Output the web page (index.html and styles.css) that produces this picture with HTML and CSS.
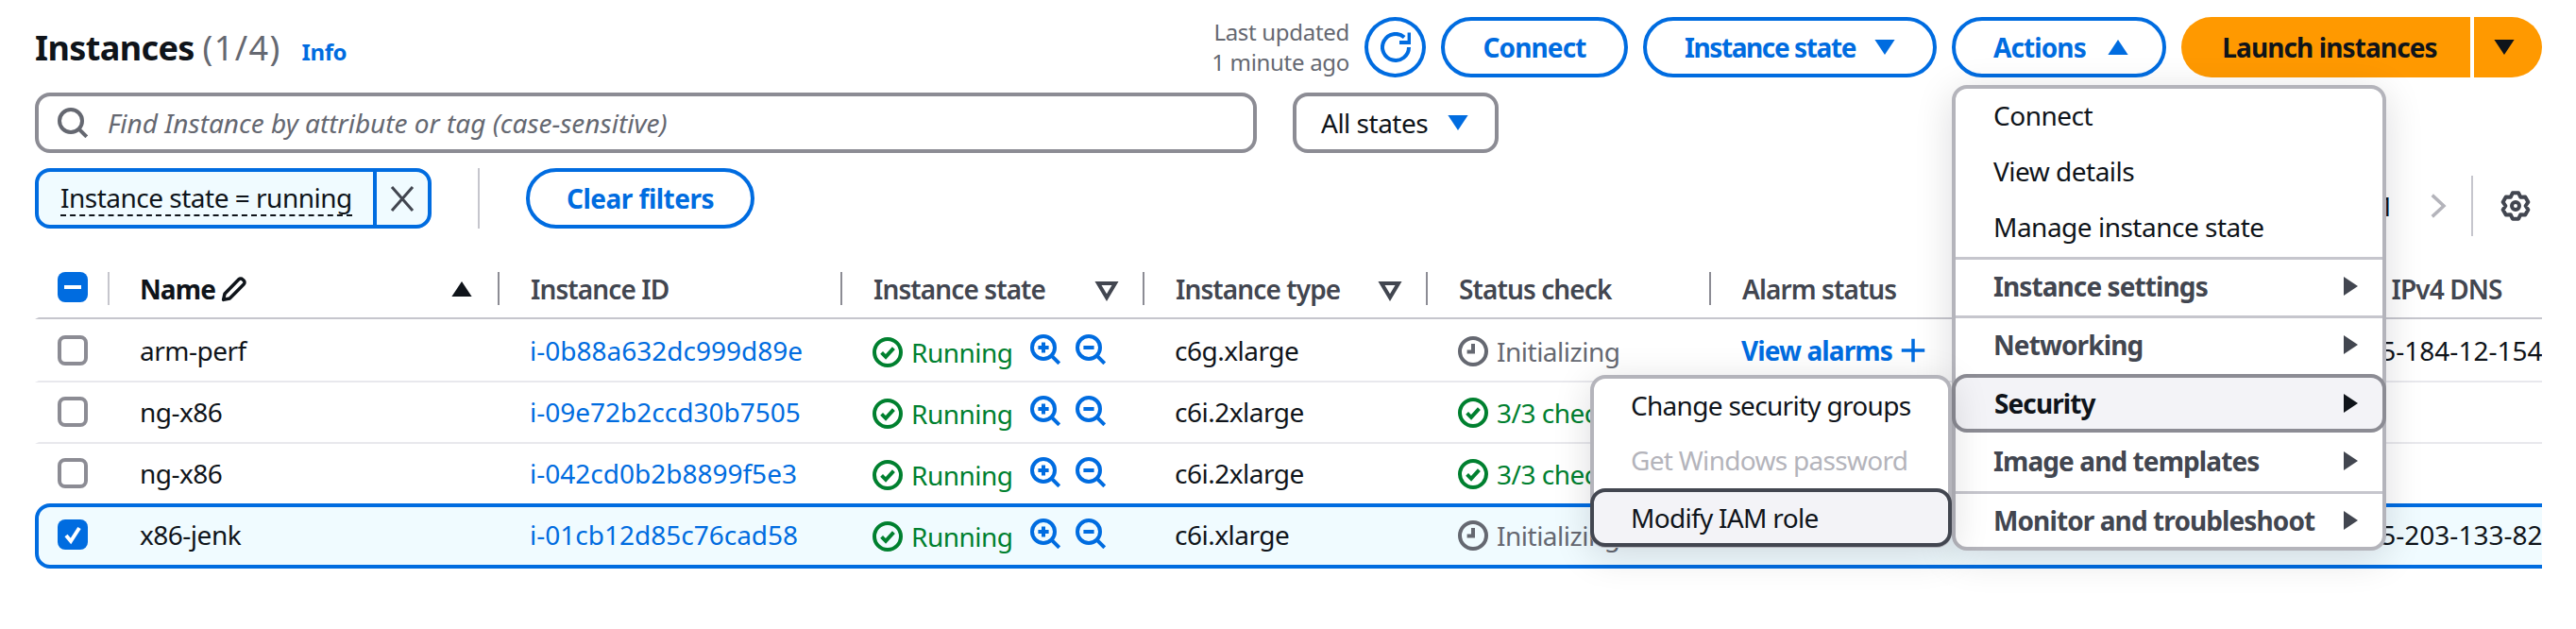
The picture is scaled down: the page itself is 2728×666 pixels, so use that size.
FILE: index.html
```html
<!DOCTYPE html>
<html lang="en">
<head>
    <meta charset="UTF-8">
    <meta name="viewport" content="width=device-width, initial-scale=1.0">
    <link rel="stylesheet" href="styles.css">
    <title>Instances</title>
</head>
<body>
    <svg class="sprite" aria-hidden="true">
        <symbol id="i-check" viewBox="0 0 16 16"><circle cx="8" cy="8" r="7"/><path d="M4.8 8.2 7 10.4l4.2-4.6"/></symbol>
        <symbol id="i-clock" viewBox="0 0 16 16"><circle cx="8" cy="8" r="7"/><path d="M8 4v4.2H4.8"/></symbol>
        <symbol id="i-zoom-in" viewBox="0 0 16 16"><circle cx="7" cy="7" r="6"/><path d="M11.4 11.4 15.4 15.4M4.2 7h5.6M7 4.2v5.6"/></symbol>
        <symbol id="i-zoom-out" viewBox="0 0 16 16"><circle cx="7" cy="7" r="6"/><path d="M11.4 11.4 15.4 15.4M4.2 7h5.6"/></symbol>
        <symbol id="i-down" viewBox="0 0 16 16"><path class="solid" d="M2.7 4h10.6L8 12z"/></symbol>
        <symbol id="i-up" viewBox="0 0 16 16"><path class="solid" d="M2.7 12h10.6L8 4z"/></symbol>
        <symbol id="i-right" viewBox="0 0 16 16"><path class="solid" d="M4.5 3 12 8l-7.500 5z"/></symbol>
        <symbol id="i-sort" viewBox="0 0 16 16"><path d="M3.500 5h9L8 12.500z"/></symbol>
    </svg>

    <div class="page">
        <!-- title row -->
        <header class="top-bar">
            <h1>Instances <span class="count">(1/4)</span> <a class="info">Info</a></h1>
            <div class="actions">
                <div class="updated">Last updated<br>1 minute ago</div>
                <button class="btn btn-icon">
                    <svg class="icon" viewBox="0 0 16 16"><path d="M15 8A7 7 0 1 1 12.600 2.700"/><path d="M15.300 .3v5.200H10"/></svg>
                </button>
                <button class="btn btn-connect">Connect</button>
                <button class="btn btn-state">Instance state <svg class="icon"><use href="#i-down"/></svg></button>
                <button class="btn btn-actions">Actions <svg class="icon"><use href="#i-up"/></svg></button>
                <div class="launch">
                    <button class="launch-main">Launch instances</button>
                    <button class="launch-caret"><svg class="icon"><use href="#i-down"/></svg></button>
                </div>
            </div>
        </header>

        <!-- search -->
        <div class="search-row">
            <div class="search">
                <svg class="icon search-icon" viewBox="0 0 16 16"><circle cx="7" cy="7" r="6"/><path d="M11.400 11.400 15.400 15.400"/></svg>
                <span class="placeholder">Find Instance by attribute or tag (case-sensitive)</span>
            </div>
            <div class="select">All states <svg class="icon"><use href="#i-down"/></svg></div>
        </div>

        <!-- filters and pagination -->
        <div class="filter-row">
            <div class="token">
                <span class="token-label"><span>Instance state = running</span></span>
                <span class="token-x"><svg class="icon" viewBox="0 0 16 16"><path d="M2.500 2 13.500 14.500M13.500 2 2.500 14.500"/></svg></span>
            </div>
            <span class="filter-divider"></span>
            <button class="btn btn-clear">Clear filters</button>
            <div class="pager">
                <span class="pager-num">1</span>
                <svg class="icon pager-next" viewBox="0 0 16 16"><path d="M5 1.500 12 8l-7 6.500"/></svg>
                <span class="pager-divider"></span>
                <svg class="icon pager-gear" viewBox="0 0 16 16"><path d="M9.570 1.180H6.430L5.350 3.410 2.880 3.230 1.310 5.950 2.700 8 1.310 10.050 2.880 12.770 5.350 12.590 6.430 14.820H9.570L10.650 12.590 13.120 12.770 14.690 10.050 13.300 8 14.690 5.950 13.120 3.230 10.650 3.410z"/><circle cx="8" cy="8" r="2"/></svg>
            </div>
        </div>

        <!-- table -->
        <div class="table">
            <div class="row head">
                <div class="cell check-cell"><span class="checkbox on"><svg viewBox="0 0 16 16"><path d="M3.500 8h9"/></svg></span></div>
                <div class="cell name-head"><span class="head-label">Name <svg class="icon pencil" viewBox="0 0 16 16"><path d="M1.500 14.500 2.300 10.800 10.800 2.200a1.600 1.600 0 0 1 2.300 0l.7.7a1.600 1.600 0 0 1 0 2.300L5.300 13.700z"/></svg></span><svg class="icon sort"><use href="#i-up"/></svg></div>
                <div class="cell">Instance ID</div>
                <div class="cell">Instance state <svg class="icon sort"><use href="#i-sort"/></svg></div>
                <div class="cell">Instance type <svg class="icon sort"><use href="#i-sort"/></svg></div>
                <div class="cell">Status check</div>
                <div class="cell">Alarm status</div>
                <div class="cell"><span><span class="dns-public">Public</span> IPv4 DNS</span></div>
            </div>

            <div class="row">
                <div class="cell check-cell"><span class="checkbox"></span></div>
                <div class="cell">arm-perf</div>
                <div class="cell"><a class="link">i-0b88a632dc999d89e</a></div>
                <div class="cell state"><svg class="icon"><use href="#i-check"/></svg>Running<span class="zooms"><svg class="icon"><use href="#i-zoom-in"/></svg><svg class="icon"><use href="#i-zoom-out"/></svg></span></div>
                <div class="cell">c6g.xlarge</div>
                <div class="cell pending"><svg class="icon"><use href="#i-clock"/></svg>Initializing</div>
                <div class="cell alarms">View alarms <svg class="icon" viewBox="0 0 16 16"><path d="M8 1v14M1 8h14"/></svg></div>
                <div class="cell dns">ec2-35-184-12-154.us-east-2</div>
            </div>
            <div class="row">
                <div class="cell check-cell"><span class="checkbox"></span></div>
                <div class="cell">ng-x86</div>
                <div class="cell"><a class="link">i-09e72b2ccd30b7505</a></div>
                <div class="cell state"><svg class="icon"><use href="#i-check"/></svg>Running<span class="zooms"><svg class="icon"><use href="#i-zoom-in"/></svg><svg class="icon"><use href="#i-zoom-out"/></svg></span></div>
                <div class="cell">c6i.2xlarge</div>
                <div class="cell passed"><svg class="icon"><use href="#i-check"/></svg>3/3 checks passed</div>
                <div class="cell"></div>
                <div class="cell"></div>
            </div>
            <div class="row no-line">
                <div class="cell check-cell"><span class="checkbox"></span></div>
                <div class="cell">ng-x86</div>
                <div class="cell"><a class="link">i-042cd0b2b8899f5e3</a></div>
                <div class="cell state"><svg class="icon"><use href="#i-check"/></svg>Running<span class="zooms"><svg class="icon"><use href="#i-zoom-in"/></svg><svg class="icon"><use href="#i-zoom-out"/></svg></span></div>
                <div class="cell">c6i.2xlarge</div>
                <div class="cell passed"><svg class="icon"><use href="#i-check"/></svg>3/3 checks passed</div>
                <div class="cell"></div>
                <div class="cell"></div>
            </div>
            <div class="row selected">
                <div class="cell check-cell"><span class="checkbox on"><svg viewBox="0 0 16 16"><path d="M4.500 8.500 7 11.500l4.500-7"/></svg></span></div>
                <div class="cell">x86-jenk</div>
                <div class="cell"><a class="link">i-01cb12d85c76cad58</a></div>
                <div class="cell state"><svg class="icon"><use href="#i-check"/></svg>Running<span class="zooms"><svg class="icon"><use href="#i-zoom-in"/></svg><svg class="icon"><use href="#i-zoom-out"/></svg></span></div>
                <div class="cell">c6i.xlarge</div>
                <div class="cell pending"><svg class="icon"><use href="#i-clock"/></svg>Initializing</div>
                <div class="cell"></div>
                <div class="cell dns">ec2-35-203-133-82.us-east-2</div>
            </div>
        </div>

        <!-- actions menu -->
        <div class="menu actions-menu">
            <div class="menu-group">
                <div class="menu-item">Connect</div>
                <div class="menu-item">View details</div>
                <div class="menu-item">Manage instance state</div>
            </div>
            <div class="menu-item parent">Instance settings <svg class="icon"><use href="#i-right"/></svg></div>
            <div class="menu-item parent">Networking <svg class="icon"><use href="#i-right"/></svg></div>
            <div class="menu-item parent open">Security <svg class="icon"><use href="#i-right"/></svg></div>
            <div class="menu-item parent after-open">Image and templates <svg class="icon"><use href="#i-right"/></svg></div>
            <div class="menu-item parent">Monitor and troubleshoot <svg class="icon"><use href="#i-right"/></svg></div>
        </div>

        <!-- security submenu -->
        <div class="menu sub-menu">
            <div class="menu-item">Change security groups</div>
            <div class="menu-item disabled">Get Windows password</div>
            <div class="menu-item active">Modify IAM role</div>
        </div>
    </div>
</body>
</html>
```

FILE: styles.css
```css
* {
    margin: 0;
    padding: 0;
    box-sizing: border-box;
    font-family: "Noto Sans", sans-serif;
}

body {
    background: #fff;
    color: #0f141a;
    font-size: 28px;
    letter-spacing: -0.5px;
    overflow: hidden;
}

.sprite {
    display: none;
}

.icon {
    width: 32px;
    height: 32px;
    flex: none;
    fill: none;
    stroke: currentColor;
    stroke-width: 2;
}

.solid {
    fill: currentColor;
    stroke-width: 0;
}

.page {
    position: relative;
    height: 666px;
    padding: 18px 36px 0 37px;
}

/* title row */
.top-bar {
    display: flex;
    align-items: center;
    justify-content: space-between;
    height: 64px;
}

h1 {
    font-size: 36px;
    font-weight: 700;
    letter-spacing: -0.6px;
    white-space: nowrap;
}

.count {
    font-weight: 400;
    letter-spacing: 1.4px;
    color: #656871;
}

.info {
    margin-left: 13px;
    font-size: 24px;
    letter-spacing: -0.4px;
    color: #006ce0;
}

.actions {
    display: flex;
    align-items: center;
    gap: 16px;
}

.updated {
    font-size: 24px;
    line-height: 32px;
    letter-spacing: -0.3px;
    color: #656871;
    text-align: right;
}

.btn {
    display: flex;
    align-items: center;
    justify-content: center;
    gap: 18px;
    height: 64px;
    border: 4px solid #006ce0;
    border-radius: 32px;
    background: #fff;
    color: #006ce0;
    font-size: 28px;
    font-weight: 700;
    letter-spacing: -0.9px;
}

.btn-icon {
    width: 65px;
    border-radius: 50%;
}

.btn-connect {
    width: 198px;
}

.btn-state {
    justify-content: flex-start;
    gap: 15px;
    width: 311px;
    padding-left: 40px;
    letter-spacing: -1.4px;
}

.btn-actions {
    justify-content: flex-start;
    width: 227px;
    padding-left: 40px;
}

.btn-clear {
    width: 242px;
    letter-spacing: -0.5px;
}

.launch {
    display: flex;
    gap: 4px;
    height: 64px;
}

.launch button {
    border: none;
    background: #f90;
    color: #0f141a;
    font-size: 28px;
    font-weight: 700;
    letter-spacing: -0.9px;
}

.launch-main {
    width: 306px;
    padding-left: 8px;
    border-radius: 32px 0 0 32px;
}

.launch-caret {
    display: flex;
    align-items: center;
    justify-content: center;
    width: 72px;
    padding-right: 8px;
    border-radius: 0 32px 32px 0;
}

/* search row */
.search-row {
    display: flex;
    gap: 38px;
    margin-top: 16px;
}

.search {
    display: flex;
    align-items: center;
    gap: 21px;
    width: 1294px;
    height: 64px;
    padding-left: 20px;
    border: 4px solid #8c8c94;
    border-radius: 16px;
}

.search-icon {
    color: #656871;
}

.placeholder {
    font-style: italic;
    letter-spacing: 0;
    color: #656871;
}

.select {
    display: flex;
    align-items: center;
    justify-content: space-between;
    width: 218px;
    height: 64px;
    padding: 0 23px 0 26px;
    border: 4px solid #8c8c94;
    border-radius: 16px;
}

.select .icon {
    color: #006ce0;
}

/* filter row */
.filter-row {
    display: flex;
    margin-top: 16px;
    height: 64px;
}

.token {
    display: flex;
    width: 420px;
    height: 64px;
    border: 4px solid #006ce0;
    border-radius: 16px;
    background: #f0fbff;
}

.token-label {
    flex: 1;
    display: flex;
    align-items: center;
    padding-left: 23px;
    border-right: 4px solid #006ce0;
}

.token-label span {
    border-bottom: 2px dashed #0f141a;
    line-height: 36px;
}

.token-x {
    display: flex;
    align-items: center;
    justify-content: center;
    width: 54px;
    color: #424650;
}

.token-x .icon {
    stroke-width: 1.500;
}

.filter-divider {
    width: 2px;
    margin: 0 49px 0 49px;
    background: #c6c6cd;
}

.pager {
    display: flex;
    align-items: center;
    height: 64px;
    margin: 8px 0 0 auto;
}

.pager-num {
    margin-right: 32px;
}

.pager-next {
    width: 28px;
    height: 28px;
    color: #b4b4bb;
}

.pager-divider {
    width: 2px;
    height: 64px;
    margin: 0 29px 0 22px;
    background: #c6c6cd;
}

.pager-gear {
    margin-right: 12px;
    color: #424650;
    stroke-linejoin: round;
}

/* table */
.table {
    margin-top: 46px;
    overflow: hidden;
}

.row {
    display: grid;
    grid-template-columns: 73px 413px 363px 320px 300px 300px 607px 400px;
    align-items: center;
    width: max-content;
    height: 65px;
    padding-bottom: 2px;
    border-left: 4px solid transparent;
    border-right: 4px solid transparent;
    border-bottom: 2px solid #e8e8ed;
}

.row.head {
    align-items: start;
    height: 50px;
    padding-bottom: 0;
    border-bottom: 2px solid #c6c6cd;
    font-weight: 600;
    letter-spacing: -0.9px;
    color: #424650;
}

.head + .row {
    height: 67px;
    padding-top: 2px;
}

.row.no-line {
    height: 63px;
    border-bottom: none;
}

.row.selected {
    height: 69px;
    padding-bottom: 3px;
    border: 4px solid #006ce0;
    border-radius: 16px 0 0 16px;
    background: #f0fbff;
}

.cell {
    display: flex;
    align-items: center;
    padding-left: 34px;
    white-space: nowrap;
}

.check-cell {
    padding-left: 20px;
}

.head .cell {
    justify-content: space-between;
    height: 35px;
    padding: 0 28px 0 33px;
    border-left: 2px solid #8c8c94;
}

.head .check-cell {
    padding: 0 0 0 20px;
    border-left: none;
    align-items: flex-start;
}

.head .name-head {
    border-left-color: #c6c6cd;
    padding-left: 32px;
    color: #0f141a;
    font-weight: 700;
}

.head-label {
    display: flex;
    align-items: center;
    gap: 6px;
}

.dns-public {
    margin: 0 10px 0 -13px;
}

.pencil {
    width: 28px;
    height: 28px;
    stroke-linejoin: round;
}

.sort {
    width: 32px;
    height: 32px;
    margin-right: -6px;
}

.checkbox {
    display: block;
    width: 32px;
    height: 32px;
    border: 4px solid #8c8c94;
    border-radius: 8px;
    background: #fff;
}

.checkbox.on {
    border: none;
    background: #006ce0;
}

.checkbox svg {
    display: block;
    width: 32px;
    height: 32px;
    fill: none;
    stroke: #fff;
    stroke-width: 2;
}

.link {
    letter-spacing: 0;
    color: #006ce0;
}

.state {
    gap: 9px;
    padding-top: 4px;
    color: #00802f;
}

.zooms {
    display: flex;
    gap: 16px;
    margin: 0 0 6px 9px;
    color: #006ce0;
}

.pending {
    gap: 9px;
    padding-top: 2px;
    color: #656871;
}

.passed {
    gap: 9px;
    padding-top: 2px;
    color: #00802f;
}

.alarms {
    gap: 8px;
    color: #006ce0;
    font-weight: 700;
    letter-spacing: -0.9px;
}

.alarms .icon {
    width: 28px;
    height: 28px;
}

.dns {
    letter-spacing: 0;
}

/* dropdown menus */
.menu {
    position: absolute;
    border: 4px solid #b4b4bb;
    border-radius: 16px;
    background: #fff;
    box-shadow: 0 8px 40px rgba(0, 7, 22, 0.14);
    white-space: nowrap;
}

.actions-menu {
    top: 90px;
    left: 2067px;
    width: 460px;
    height: 493px;
}

.sub-menu {
    top: 397px;
    left: 1684px;
    width: 383px;
    height: 183px;
}

.menu-item {
    display: flex;
    align-items: center;
    justify-content: space-between;
    height: 59px;
    padding: 0 18px 3px 40px;
}

.menu-group {
    height: 178px;
}

.parent {
    height: 62px;
    border-top: 3px solid #c6c6cd;
    font-weight: 700;
    letter-spacing: -0.9px;
    color: #424650;
}

.parent.open {
    position: relative;
    margin: 0 -4px;
    padding: 0 18px 0 41px;
    border: 4px solid #8c8c94;
    border-radius: 16px;
    background: #f3f3f7;
    color: #0f141a;
}

.parent.after-open {
    border-top: none;
}

.sub-menu .menu-item {
    height: 58px;
    padding-left: 39px;
    letter-spacing: -0.7px;
}

.sub-menu .disabled {
    color: #b4b4bb;
}

.sub-menu .active {
    height: 62px;
    margin: 0 -4px;
    padding: 0 15px 0 39px;
    border: 4px solid #424650;
    border-radius: 16px;
    background: #f3f3f7;
}
```
